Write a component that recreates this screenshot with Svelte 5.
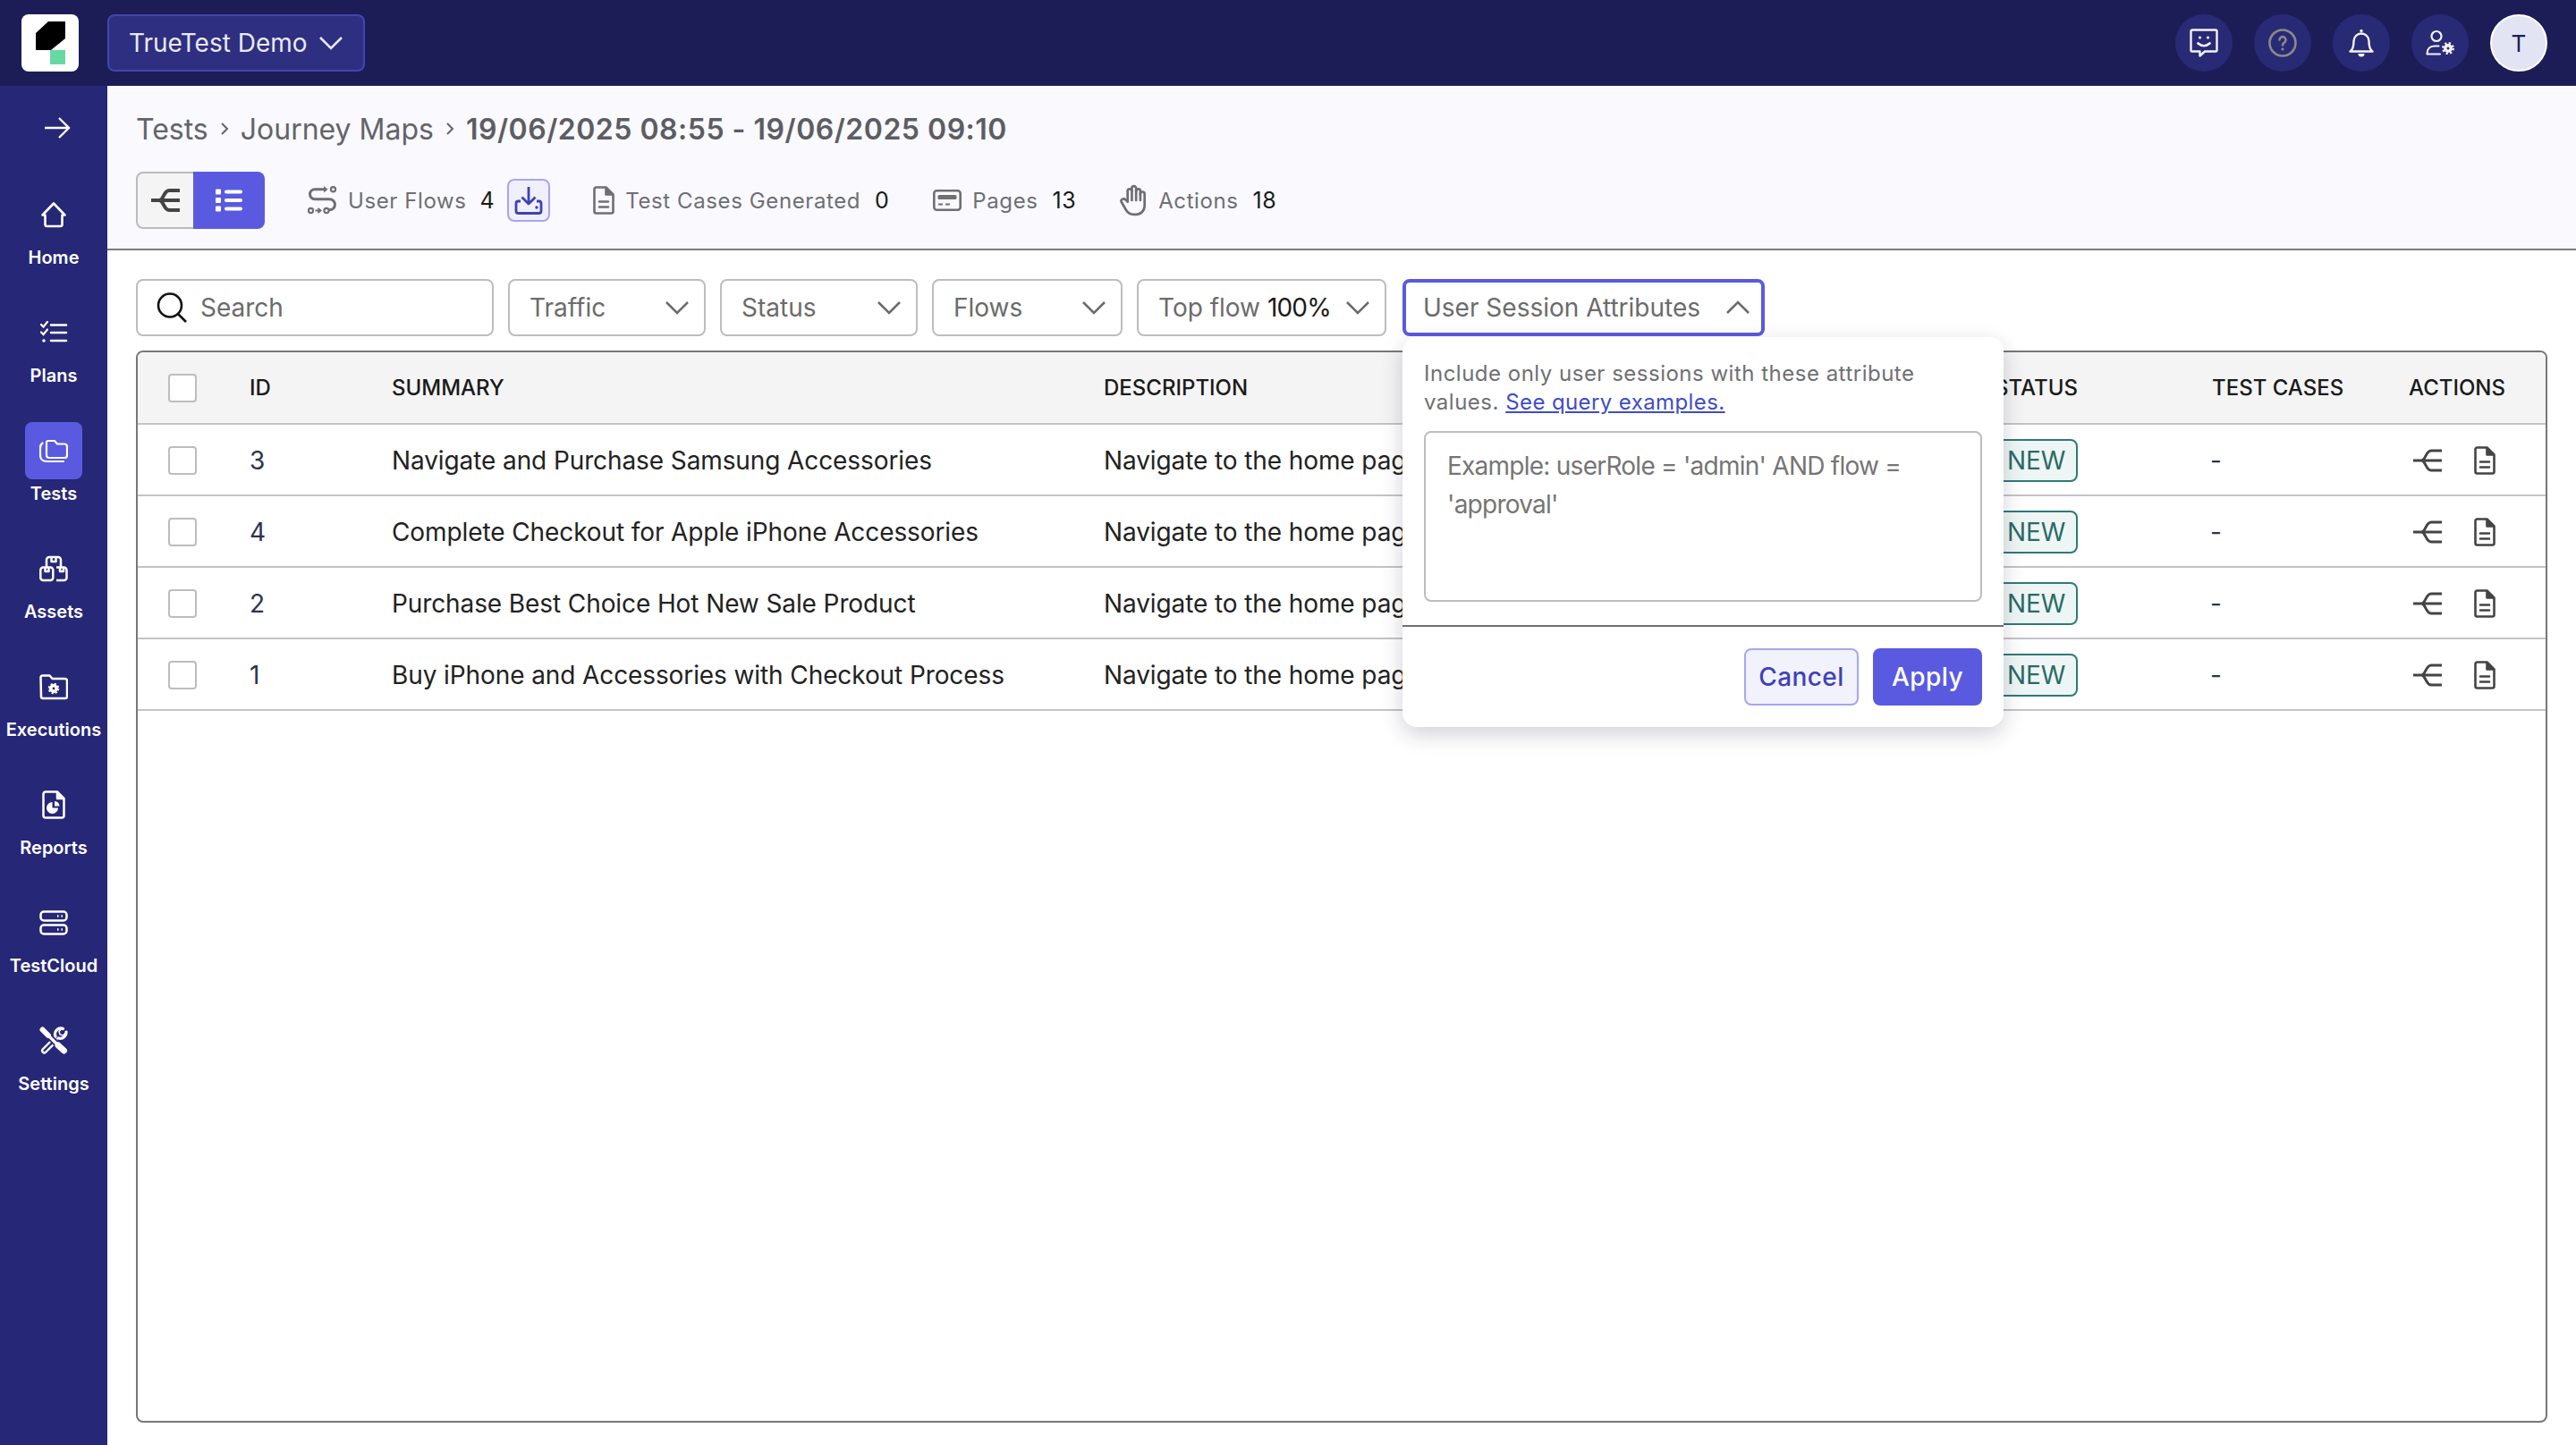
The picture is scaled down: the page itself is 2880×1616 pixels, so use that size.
<script lang="ts">
	const rows = [
		{ id: 3, summary: 'Navigate and Purchase Samsung Accessories' },
		{ id: 4, summary: 'Complete Checkout for Apple iPhone Accessories' },
		{ id: 2, summary: 'Purchase Best Choice Hot New Sale Product' },
		{ id: 1, summary: 'Buy iPhone and Accessories with Checkout Process' }
	];

	const nav = [
		{ label: 'Home', icon: homeIcon },
		{ label: 'Plans', icon: plansIcon },
		{ label: 'Tests', icon: testsIcon, active: true },
		{ label: 'Assets', icon: assetsIcon },
		{ label: 'Executions', icon: executionsIcon },
		{ label: 'Reports', icon: reportsIcon },
		{ label: 'TestCloud', icon: cloudIcon },
		{ label: 'Settings', icon: settingsIcon }
	];

	const filters = [
		{ label: 'Traffic', width: 221 },
		{ label: 'Status', width: 221 },
		{ label: 'Flows', width: 213 }
	];
</script>

{#snippet chevron(up = false)}
	<svg class="chevron" class:up width="28" height="16" viewBox="0 0 28 16" fill="none" stroke="currentColor" stroke-width="2.6">
		<path d="M2 2l12 12L26 2" />
	</svg>
{/snippet}

{#snippet splitIcon(weight = 3)}
	<svg width="32" height="26" viewBox="0 0 32 26" fill="none" stroke="currentColor" stroke-width={weight}>
		<path d="M0 13h32M9 13c5 0 5-11 11-11h12M9 13c5 0 5 11 11 11h12" />
	</svg>
{/snippet}

{#snippet docIcon()}
	<svg width="24" height="32" viewBox="0 0 24 32" fill="none" stroke="currentColor" stroke-width="2.6" stroke-linejoin="round">
		<path d="M3.500 1.500h11l8 8v19a2 2 0 0 1-2 2h-17a2 2 0 0 1-2-2v-25a2 2 0 0 1 2-2z" />
		<path d="M14.500 2v7.500h7.500" fill="currentColor" />
		<path d="M7 17.500h10M7 23.500h10" stroke-linecap="round" />
	</svg>
{/snippet}

{#snippet homeIcon()}
	<svg width="32" height="32" viewBox="0 0 32 32" fill="none" stroke="currentColor" stroke-width="2.6" stroke-linejoin="round">
		<path d="M16 3.500 28.500 16.500H25.500V27a2 2 0 0 1-2 2h-15a2 2 0 0 1-2-2V16.500h-3z" />
	</svg>
{/snippet}

{#snippet plansIcon()}
	<svg width="32" height="32" viewBox="0 0 32 32" fill="none" stroke="currentColor" stroke-width="2.6" stroke-linecap="round">
		<path d="M13 7.500h17M13 16h17M13 25h17" />
		<path d="M2 7l2.500 2.500L9 4M2 15.500 4.500 18 9 12.500" stroke-width="2.200" />
		<circle cx="5" cy="25" r="1.800" fill="currentColor" stroke="none" />
	</svg>
{/snippet}

{#snippet testsIcon()}
	<svg width="32" height="32" viewBox="0 0 32 32" fill="none" stroke="currentColor" stroke-width="2.200" stroke-linejoin="round">
		<path d="M8 7a2 2 0 0 1 2-2h7l3 3.500h8a3 3 0 0 1 3 3V21a3 3 0 0 1-3 3H11a3 3 0 0 1-3-3z" />
		<path d="M3.500 7.500C1.500 9 1 11 1 13v8c0 4.500 3 7 7 7h19" stroke-linecap="round" />
	</svg>
{/snippet}

{#snippet assetsIcon()}
	<svg width="32" height="32" viewBox="0 0 32 32" fill="none" stroke="currentColor" stroke-width="2.500" stroke-linejoin="round">
		<path d="M8 14.500V6a3 3 0 0 1 3-3h10a3 3 0 0 1 3 3v8.500" />
		<path d="M13.500 3.500v4.500h5V3.500" />
		<rect x="1.300" y="14.500" width="14" height="14.500" rx="3" />
		<path d="M19 14.500h8.500a3 3 0 0 1 3 3V26a3 3 0 0 1-3 3H19" />
		<path d="M6.500 15v4h4v-4M23 15v4h4v-4" />
	</svg>
{/snippet}

{#snippet executionsIcon()}
	<svg width="32" height="32" viewBox="0 0 32 32" fill="none" stroke="currentColor" stroke-width="2.500" stroke-linejoin="round">
		<path d="M1.500 5.500a2 2 0 0 1 2-2h8l3 3.500h14a2.500 2.500 0 0 1 2.500 2.500V27a2 2 0 0 1-2 2h-25a2 2 0 0 1-2-2z" />
		<circle cx="16" cy="18" r="5" stroke-width="2.600" stroke-dasharray="2 1.930" />
		<circle cx="16" cy="18" r="3.200" stroke-width="3.600" />
	</svg>
{/snippet}

{#snippet reportsIcon()}
	<svg width="32" height="32" viewBox="0 0 32 32" fill="none" stroke="currentColor" stroke-width="2.500" stroke-linejoin="round">
		<path d="M7 1.500h13l7.500 7.500v19a2.500 2.500 0 0 1-2.500 2.500H7A2.500 2.500 0 0 1 4.500 28V4A2.500 2.500 0 0 1 7 1.500z" />
		<path d="M20 2v7h7" fill="currentColor" />
		<path d="M14.500 13a6.500 6.500 0 1 0 6.500 6.500h-6.500z" fill="currentColor" stroke="none" />
		<path d="M17 12a6 6 0 0 1 5.500 5.500H17z" fill="currentColor" stroke="none" />
	</svg>
{/snippet}

{#snippet cloudIcon()}
	<svg width="32" height="32" viewBox="0 0 32 32" fill="none" stroke="currentColor" stroke-width="2.500">
		<rect x="1.500" y="3.500" width="29" height="10" rx="3.500" />
		<rect x="1.500" y="18.500" width="29" height="10" rx="3.500" />
		<path d="M20 8.500h1.500M24.500 8.500H26M20 23.500h1.500M24.500 23.500H26" />
	</svg>
{/snippet}

{#snippet settingsIcon()}
	<svg width="32" height="32" viewBox="0 0 32 32" fill="none" stroke="currentColor" stroke-linecap="round">
		<path d="M17 15.500 5.500 27" stroke-width="7" />
		<path d="M17 15.500 5.500 27" stroke="#262776" stroke-width="2.400" />
		<path d="M26.500 2.500A6.500 6.500 0 0 0 18 11l-2 2M30 6a6.500 6.500 0 0 1-8.500 7" stroke-width="3.200" />
		<path d="M26 1.500 22 5.500l1 3.500 3.500 1 4-4" stroke-width="1.500" />
		<path d="M11 11l10 10" stroke="#262776" stroke-width="7" stroke-linecap="butt" />
		<path d="M3.500 3.500 10 10" stroke-width="6" />
		<path d="M9 9l12 12" stroke-width="3.400" />
		<path d="M21 21l6.500 6" stroke-width="7" />
	</svg>
{/snippet}

<div class="app">
	<header class="topbar">
		<div class="logo">
			<svg width="64" height="64" viewBox="0 0 64 64">
				<path d="M30 8h19v19L33 40H16V21z" fill="#000" />
				<rect x="32" y="40" width="17" height="16" fill="#68d8a5" />
			</svg>
		</div>
		<button type="button" class="org">
			TrueTest Demo
			{@render chevron()}
		</button>
		<div class="top-actions">
			<span class="round">
				<svg width="32" height="32" viewBox="0 0 32 32" fill="none" stroke="currentColor" stroke-width="2.400" stroke-linejoin="round">
					<path d="M3 1.500h26a1.500 1.500 0 0 1 1.500 1.500v21a1.500 1.500 0 0 1-1.500 1.500H17l-5.500 5v-5H3A1.500 1.500 0 0 1 1.500 24V3A1.500 1.500 0 0 1 3 1.500z" />
					<circle cx="11.500" cy="10" r="1.600" fill="currentColor" stroke="none" />
					<circle cx="20.500" cy="10" r="1.600" fill="currentColor" stroke="none" />
					<path d="M9.500 16.500c4 3.500 9 3.500 13 0" stroke-linecap="round" stroke-width="2.800" />
				</svg>
			</span>
			<span class="round">
				<svg width="32" height="32" viewBox="0 0 32 32" fill="none" stroke="#8a8a8a" stroke-width="2.600">
					<circle cx="16" cy="16" r="14.500" />
					<path d="M12.500 12.500a3.500 3.500 0 1 1 5.500 3c-1.200.8-2 1.500-2 3" stroke-linecap="round" />
					<circle cx="16" cy="23" r="1.600" fill="#8a8a8a" stroke="none" />
				</svg>
			</span>
			<span class="round">
				<svg width="32" height="32" viewBox="0 0 32 32" fill="none" stroke="currentColor" stroke-width="2.400" stroke-linejoin="round">
					<path d="M3.500 25.500c3-2 4-5 4-11.500a8.500 8.500 0 0 1 17 0c0 6.500 1 9.500 4 11.500z" />
					<circle cx="16" cy="2.500" r="1.700" fill="currentColor" stroke="none" />
					<path d="M12.500 28h7a3.500 3.500 0 0 1-7 0z" fill="currentColor" stroke="none" />
				</svg>
			</span>
			<span class="round">
				<svg width="32" height="32" viewBox="0 0 32 32" fill="none" stroke="currentColor" stroke-width="2.200" stroke-linecap="round">
					<circle cx="12" cy="8.500" r="5.500" />
					<path d="M1.500 28.500c0-6 3.500-9 8-9h5M1.500 28.500H16" />
					<circle cx="25" cy="22" r="5.700" stroke-width="2.600" stroke-dasharray="2.200 2.280" stroke-linecap="butt" />
					<circle cx="25" cy="22" r="3.200" stroke-width="3.400" />
				</svg>
			</span>
			<span class="avatar">T</span>
		</div>
	</header>

	<div class="body">
		<nav class="sidebar" aria-label="Main">
			<div class="expand">
				<svg width="32" height="32" viewBox="0 0 32 32" fill="none" stroke="currentColor" stroke-width="2.400">
					<path d="M2 16h27M18 5l11 11-11 11" />
				</svg>
			</div>
			{#each nav as item (item.label)}
				<a class="nav-item" class:active={item.active} href="#top">
					<span class="nav-icon">{@render item.icon()}</span>
					<span class="nav-label">{item.label}</span>
				</a>
			{/each}
		</nav>

		<main class="main">
			<section class="subheader">
				<div class="crumbs">
					<span>Tests</span>
					<svg width="10" height="16" viewBox="0 0 10 16" fill="none" stroke="currentColor" stroke-width="2"><path d="M2 2l6 6-6 6" /></svg>
					<span>Journey Maps</span>
					<svg width="10" height="16" viewBox="0 0 10 16" fill="none" stroke="currentColor" stroke-width="2"><path d="M2 2l6 6-6 6" /></svg>
					<strong>19/06/2025 08:55 - 19/06/2025 09:10</strong>
				</div>
				<div class="toolbar">
					<div class="toggle">
						<span class="toggle-map">{@render splitIcon(4)}</span>
						<span class="toggle-list">
							<svg width="32" height="26" viewBox="0 0 32 26" fill="currentColor">
								<rect x="1" y="0.500" width="6" height="6" rx="1" />
								<rect x="1" y="10" width="6" height="6" rx="1" />
								<rect x="1" y="19.500" width="6" height="6" rx="1" />
								<rect x="11" y="1.500" width="20" height="4" rx="2" />
								<rect x="11" y="11" width="20" height="4" rx="2" />
								<rect x="11" y="20.500" width="20" height="4" rx="2" />
							</svg>
						</span>
					</div>
					<div class="stat first">
						<svg width="34" height="32" viewBox="0 0 34 32" fill="none" stroke="currentColor" stroke-width="3">
							<path d="M21 3.700H8a5.500 5.500 0 0 0 0 11h16.500a6 6 0 0 1 0 12H24" />
							<path d="M18 0l4.500 3.700-4.500 3.800" fill="currentColor" stroke="none" />
							<circle cx="28.500" cy="3.700" r="2.600" stroke-width="2.200" />
							<circle cx="3.500" cy="27.500" r="2.600" stroke-width="2.200" />
							<path d="M8.500 27.500h5M11.500 25l3 2.500-3 2.500" stroke-width="2" />
							<circle cx="21" cy="27.500" r="2.600" stroke-width="2.200" />
						</svg>
						<span class="stat-label">User Flows</span>
						<span class="stat-value">4</span>
						<button type="button" class="download" aria-label="Download">
							<svg width="32" height="32" viewBox="0 0 32 32" fill="none" stroke="currentColor" stroke-width="2.800" stroke-linejoin="round">
								<path d="M16 1v19M8.500 12.500 16 20l7.500-7.500" />
								<path d="M7 17H4.500A2.500 2.500 0 0 0 2 19.500V28a2.500 2.500 0 0 0 2.500 2.500h23A2.500 2.500 0 0 0 30 28v-8.500a2.500 2.500 0 0 0-2.500-2.500H25" />
								<circle cx="25" cy="24" r="1.700" fill="currentColor" stroke="none" />
							</svg>
						</button>
					</div>
					<div class="stat">
						{@render docIcon()}
						<span class="stat-label">Test Cases Generated</span>
						<span class="stat-value">0</span>
					</div>
					<div class="stat">
						<svg width="32" height="24" viewBox="0 0 32 24" fill="none" stroke="currentColor" stroke-width="2.600">
							<rect x="1.300" y="1.300" width="29.400" height="21.400" rx="3" />
							<rect x="5.500" y="6" width="21" height="5" rx="1.500" fill="currentColor" stroke="none" />
							<path d="M6 16.500h5M14 16.500h5" stroke-width="2.200" />
						</svg>
						<span class="stat-label">Pages</span>
						<span class="stat-value">13</span>
					</div>
					<div class="stat">
						<svg class="hand" width="38" height="38" viewBox="0 0 24 24" fill="none" stroke="currentColor" stroke-width="1.700" stroke-linecap="round" stroke-linejoin="round">
							<path d="M8 13v-7.500a1.500 1.500 0 0 1 3 0v6.500" />
							<path d="M11 5.500v-2a1.500 1.500 0 1 1 3 0v8.500" />
							<path d="M14 5.500a1.500 1.500 0 0 1 3 0v6.500" />
							<path d="M17 7.500a1.500 1.500 0 0 1 3 0v8.500a6 6 0 0 1-6 6h-2h.208a6 6 0 0 1-5.012-2.700a69.740 69.740 0 0 1-.196-.300c-.312-.479-1.407-2.388-3.286-5.728a1.500 1.500 0 0 1 .536-2.022a1.867 1.867 0 0 1 2.280.280l1.470 1.470" />
						</svg>
						<span class="stat-label">Actions</span>
						<span class="stat-value">18</span>
					</div>
				</div>
			</section>

			<section class="content">
				<div class="filters">
					<div class="search">
						<svg width="34" height="34" viewBox="0 0 34 34" fill="none" stroke="#111" stroke-width="2.600">
							<circle cx="15" cy="14.500" r="13" />
							<path d="M24 24l9 9" />
						</svg>
						<span>Search</span>
					</div>
					{#each filters as filter (filter.label)}
						<button type="button" class="select" style="width: {filter.width}px">
							<span>{filter.label}</span>
							{@render chevron()}
						</button>
					{/each}
					<button type="button" class="select" style="width: 279px">
						<span>Top flow <b>100%</b></span>
						{@render chevron()}
					</button>
					<div class="attributes">
						<button type="button" class="select open">
							<span>User Session Attributes</span>
							{@render chevron(true)}
						</button>
						<div class="popover">
							<div class="popover-body">
								<p>Include only user sessions with these attribute values. <a href="#top">See query examples.</a></p>
								<textarea placeholder="Example: userRole = 'admin' AND flow = 'approval'"></textarea>
							</div>
							<div class="popover-foot">
								<button type="button" class="btn cancel">Cancel</button>
								<button type="button" class="btn apply">Apply</button>
							</div>
						</div>
					</div>
				</div>

				<div class="table">
					<div class="row head">
						<span class="check"></span>
						<span>ID</span>
						<span>SUMMARY</span>
						<span>DESCRIPTION</span>
						<span>STATUS</span>
						<span>TEST CASES</span>
						<span>ACTIONS</span>
					</div>
					{#each rows as row (row.id)}
						<div class="row">
							<span class="check"></span>
							<span class="id">{row.id}</span>
							<span>{row.summary}</span>
							<span class="desc">Navigate to the home page and continue through the flow</span>
							<span><span class="badge">NEW</span></span>
							<span class="id dash">-</span>
							<span class="actions">
								{@render splitIcon()}
								{@render docIcon()}
							</span>
						</div>
					{/each}
				</div>
			</section>
		</main>
	</div>
</div>

<style>
	:global(body) {
		margin: 0;
		font-family: Inter, 'Liberation Sans', sans-serif;
	}

	button {
		font: inherit;
		cursor: pointer;
	}

	.app {
		display: flex;
		flex-direction: column;
		height: 100vh;
		overflow: hidden;
		background: #fff;
	}

	.topbar {
		flex: 0 0 96px;
		display: flex;
		align-items: center;
		padding: 0 32px 0 24px;
		background: #1c1d57;
	}

	.logo {
		width: 64px;
		height: 64px;
		border-radius: 8px;
		background: #fff;
	}

	.logo svg {
		display: block;
	}

	.org {
		display: flex;
		align-items: center;
		gap: 12px;
		height: 64px;
		margin-left: 32px;
		padding: 0 22px;
		width: 288px;
		border: 2px solid #4345b3;
		border-radius: 8px;
		background: #2e2f80;
		color: #e8e8f6;
		font-size: 28px;
		white-space: nowrap;
	}

	.top-actions {
		margin-left: auto;
		display: flex;
		gap: 24px;
	}

	.round,
	.avatar {
		display: flex;
		align-items: center;
		justify-content: center;
		width: 64px;
		height: 64px;
		border-radius: 50%;
		box-sizing: border-box;
	}

	.round {
		background: #292a75;
		color: #f2f2f8;
	}

	.avatar {
		background: #e2e4f4;
		border: 2px solid #fff;
		color: #1c1d57;
		font-size: 26px;
	}

	.body {
		flex: 1;
		display: flex;
		min-height: 0;
	}

	.sidebar {
		flex: 0 0 120px;
		display: flex;
		flex-direction: column;
		align-items: center;
		background: #262776;
		color: #fff;
	}

	.expand {
		height: 94px;
		display: flex;
		align-items: center;
		padding-left: 8px;
	}

	.nav-item {
		display: flex;
		flex-direction: column;
		align-items: center;
		height: 132px;
		padding-top: 18px;
		box-sizing: border-box;
		color: #fff;
		text-decoration: none;
	}

	.nav-icon {
		display: flex;
		align-items: center;
		justify-content: center;
		width: 64px;
		height: 64px;
		border-radius: 8px;
	}

	.active .nav-icon {
		background: #5a5ae0;
	}

	.nav-label {
		margin-top: 2px;
		font-size: 20px;
		font-weight: 600;
		line-height: 28px;
		white-space: nowrap;
	}

	.main {
		flex: 1;
		min-width: 0;
		display: flex;
		flex-direction: column;
	}

	.subheader {
		flex: 0 0 auto;
		padding: 24px 32px 22px;
		background: #f9f9fe;
		border-bottom: 2px solid #7a7a7a;
	}

	.crumbs {
		display: flex;
		align-items: center;
		gap: 13px;
		height: 48px;
		color: #63646a;
		font-size: 32px;
	}

	.crumbs strong {
		font-weight: 600;
		color: #5c5d63;
		letter-spacing: 0.5px;
	}

	.toolbar {
		display: flex;
		align-items: center;
		gap: 49px;
		margin-top: 24px;
	}

	.toggle {
		display: flex;
		height: 64px;
	}

	.toggle span {
		display: flex;
		align-items: center;
		justify-content: center;
		box-sizing: border-box;
	}

	.toggle-map {
		width: 64px;
		background: #f4f4f4;
		border: 2px solid #bbb;
		border-right: 0;
		border-radius: 8px 0 0 8px;
		color: #444;
	}

	.toggle-list {
		width: 80px;
		background: #5a5ae0;
		border-radius: 0 8px 8px 0;
		color: #fff;
	}

	.stat {
		display: flex;
		align-items: center;
		gap: 12px;
		color: #6f6f73;
	}

	.stat.first {
		margin-left: -1px;
		margin-right: -1px;
		gap: 11px;
	}

	.hand {
		margin: -4px -3px -4px -4px;
	}

	.stat-label {
		font-size: 24px;
		letter-spacing: 0.6px;
	}

	.stat-value {
		margin-left: 4px;
		color: #1a1a1a;
		font-size: 25px;
		letter-spacing: 0.5px;
	}

	.download {
		display: flex;
		align-items: center;
		justify-content: center;
		width: 48px;
		height: 48px;
		margin-left: 3px;
		padding: 0;
		background: #eff0fb;
		border: 2px solid #a5a6f0;
		border-radius: 8px;
		color: #3f41b8;
	}

	.content {
		flex: 1;
		min-height: 0;
		display: flex;
		flex-direction: column;
		padding: 32px 32px 25px;
	}

	.filters {
		display: flex;
		gap: 16px;
		height: 64px;
	}

	.search,
	.select {
		display: flex;
		align-items: center;
		box-sizing: border-box;
		height: 64px;
		background: #fff;
		border: 2px solid #bdbdbd;
		border-radius: 8px;
		color: #6b6b6b;
		font-size: 28px;
	}

	.search {
		width: 400px;
		gap: 15px;
		padding-left: 21px;
	}

	.select {
		justify-content: space-between;
		padding: 0 16px 0 22px;
		white-space: nowrap;
	}

	.select b {
		font-weight: 400;
		color: #1a1a1a;
		letter-spacing: -0.8px;
	}

	.chevron.up {
		transform: rotate(180deg);
	}

	.attributes {
		position: relative;
		margin-left: 2px;
		width: 405px;
	}

	.select.open {
		width: 100%;
		border: 4px solid #5a5ae0;
		padding: 0 12px 0 19px;
	}

	.popover {
		position: absolute;
		z-index: 2;
		top: 65px;
		left: 0;
		width: 672px;
		height: 436px;
		box-sizing: border-box;
		background: #fff;
		border-radius: 16px;
		box-shadow: 0 8px 24px rgba(30, 30, 60, 0.2);
		display: flex;
		flex-direction: column;
	}

	.popover-body {
		flex: 1;
		padding: 25px 24px 0;
	}

	.popover p {
		margin: 0;
		font-size: 24px;
		line-height: 32px;
		color: #6f6f73;
		letter-spacing: 0.5px;
	}

	.popover a {
		color: #3f4cc8;
		letter-spacing: 0.4px;
	}

	textarea {
		display: block;
		width: 100%;
		height: 191px;
		margin-top: 16px;
		padding: 16px 24px;
		box-sizing: border-box;
		background: #fff;
		border: 2px solid #bdbdbd;
		border-radius: 8px;
		font: inherit;
		font-size: 28px;
		letter-spacing: -0.75px;
		line-height: 43px;
		resize: none;
		outline: 0;
	}

	textarea::placeholder {
		color: #757575;
		opacity: 1;
	}

	.popover-foot {
		display: flex;
		justify-content: flex-end;
		gap: 16px;
		padding: 24px;
		border-top: 2px solid #6f6f6f;
	}

	.btn {
		height: 64px;
		padding: 0;
		border-radius: 8px;
		font-size: 28px;
		font-weight: 500;
		letter-spacing: 0.4px;
	}

	.cancel {
		width: 128px;
		background: #f1f2fc;
		border: 2px solid #a5a6f0;
		color: #3f41b8;
	}

	.apply {
		width: 122px;
		background: #5a5ae0;
		border: 0;
		color: #fff;
	}

	.table {
		flex: 1;
		min-height: 0;
		margin-top: 16px;
		border: 2px solid #777;
		border-radius: 8px;
		overflow: hidden;
	}

	.row {
		display: grid;
		grid-template-columns: 91px 159px 796px 996px 243px 220px 1fr;
		align-items: center;
		height: 80px;
		padding: 2px 0 0 34px;
		box-sizing: border-box;
		border-bottom: 2px solid #c4c4c4;
		color: #222;
		font-size: 28px;
		letter-spacing: -0.1px;
		white-space: nowrap;
	}

	.row.head {
		height: 81px;
		padding-top: 0;
		background: #f4f4f4;
		font-size: 24px;
		font-weight: 500;
		letter-spacing: 0;
		color: #1a1a1a;
	}

	.check {
		display: block;
		width: 32px;
		height: 32px;
		box-sizing: border-box;
		background: #fff;
		border: 2px solid #bdbdbd;
		border-radius: 4px;
	}

	.id {
		color: #2c3450;
	}

	.dash {
		margin-left: -2px;
	}

	.desc {
		overflow: hidden;
	}

	.badge {
		display: inline-flex;
		align-items: center;
		height: 48px;
		padding: 0 12px;
		box-sizing: border-box;
		background: #eef6f5;
		border: 2px solid #2f7a75;
		border-radius: 8px;
		color: #2a6a66;
		font-size: 28px;
	}

	.actions {
		display: flex;
		align-items: center;
		gap: 36px;
		padding-left: 5px;
		color: #444;
	}
</style>
